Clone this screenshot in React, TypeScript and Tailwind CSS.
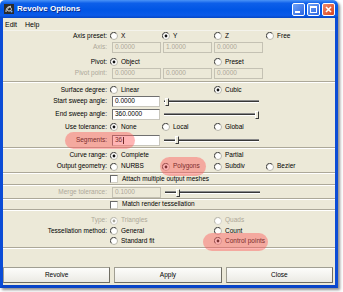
import React from 'react';

type Opt = { label: string; checked?: boolean } | null;

const Radio = ({ checked = false, disabled = false }: { checked?: boolean; disabled?: boolean }) => (
  <svg width="8" height="8" viewBox="0 0 8 8" className="shrink-0">
    <circle cx="4" cy="4" r="3.5" fill="#fff" stroke={disabled ? '#d2d0c6' : '#b8b6aa'} />
    <path d="M1.3 6.2 A3.4 3.4 0 0 1 6.2 1.3" fill="none" stroke={disabled ? '#bdbbb0' : '#4a4a4a'} />
    {checked && <circle cx="4" cy="4" r="1.4" fill={disabled ? '#a8a69a' : '#111'} />}
  </svg>
);

const Check = () => (
  <div className="w-[8px] h-[8px] shrink-0 bg-white border border-t-[#6a6a6a] border-l-[#6a6a6a] border-b-[#d0cec4] border-r-[#d0cec4]" />
);

const Row = ({ label = '', disabled = false, className = '', children }: { label?: string; disabled?: boolean; className?: string; children?: React.ReactNode }) => (
  <div className={`flex items-center ${className}`}>
    <div className={`w-[104px] mr-[3px] text-right whitespace-nowrap ${disabled ? 'text-[#aca899]' : 'text-black'}`}>{label}</div>
    {children}
  </div>
);

const Options = ({ items, disabled = false }: { items: Opt[]; disabled?: boolean }) => (
  <div className="flex">
    {items.map((o, i) => (
      <div key={i} className="w-[52px] flex items-center gap-[3px]">
        {o && (
          <>
            <Radio checked={o.checked} disabled={disabled} />
            <span className={`whitespace-nowrap ${disabled ? 'text-[#aca899]' : 'text-black'}`}>{o.label}</span>
          </>
        )}
      </div>
    ))}
  </div>
);

const Field = ({ value, disabled = false, w = 'w-[49px]', cursor = false }: { value: string; disabled?: boolean; w?: string; cursor?: boolean }) => (
  <div
    className={`${w} h-[11px] shrink-0 flex items-center pl-[2px] border ${
      disabled
        ? 'bg-[#ECE9D8] text-[#aca899] border-[#c4c1b3]'
        : 'bg-white text-black border-t-[#6f6f6f] border-l-[#6f6f6f] border-b-[#c8c6bc] border-r-[#c8c6bc]'
    }`}
  >
    {value}
    {cursor && <span className="ml-[1px] w-[1px] h-[7px] bg-black" />}
  </div>
);

const Slider = ({ pos }: { pos: number }) => (
  <div className="relative ml-[4px] w-[95px] h-[10px] flex items-center">
    <div className="w-full h-[3px] bg-[#383838] border-t border-[#8a8a8a] border-b border-b-white" />
    <div className="absolute top-[1px] w-[4px] h-[8px] bg-[#ECE9D8] border border-t-white border-l-white border-r-[#3a3a3a] border-b-[#3a3a3a]" style={{ left: pos }} />
  </div>
);

const Sep = ({ className = '' }: { className?: string }) => (
  <div className={`h-[2px] border-t border-[#aca899] border-b border-b-white ${className}`} />
);

const TitleButton = ({ kind }: { kind: 'min' | 'max' | 'close' }) => (
  <div
    className={`w-[13px] h-[13px] rounded-[2px] border border-white flex items-center justify-center ${
      kind === 'close'
        ? 'bg-[linear-gradient(135deg,#f08a6c,#d9431e)]'
        : 'bg-[linear-gradient(135deg,#6ea3f8,#2a63e0)]'
    }`}
  >
    {kind === 'min' && <div className="w-[5px] h-[2px] bg-white mt-[6px] mr-[3px]" />}
    {kind === 'max' && <div className="w-[7px] h-[7px] border border-white border-t-2" />}
    {kind === 'close' && (
      <svg width="7" height="7" viewBox="0 0 7 7">
        <path d="M1 1 L6 6 M6 1 L1 6" stroke="#fff" strokeWidth="1.6" />
      </svg>
    )}
  </div>
);

const Btn = ({ label }: { label: string }) => (
  <div className="h-[16px] flex items-center justify-center bg-[linear-gradient(to_bottom,#fdfdfb,#ebeae4)] border border-[#a09e92] border-r-[#6f6d63] border-b-[#6f6d63] text-black">
    {label}
  </div>
);

export default function App() {
  return (
    <div className="relative w-[343px] h-[292px] bg-white overflow-hidden font-['Liberation_Sans',Arial,sans-serif] text-[6.5px] leading-none">
      <div className="w-[338px] h-[288px] flex flex-col rounded-t-[5px] overflow-hidden shadow-[2px_2px_3px_rgba(0,0,0,0.45)]">
        <div className="h-[18px] shrink-0 flex items-center pl-[4px] pr-[3px] bg-[linear-gradient(to_bottom,#4a93f7_0%,#0d5fe9_18%,#0055e5_55%,#0a5ae9_85%,#0646c4_100%)]">
          <svg width="10" height="10" viewBox="0 0 10 10" className="shrink-0">
            <rect width="10" height="10" fill="#2b2b2b" />
            <path d="M2 8 C2 4 4 2 6 3 S8 7 5 7 S3 4 7 2" stroke="#e8e8e8" strokeWidth="1" fill="none" />
            <circle cx="7.5" cy="7.5" r="1" fill="#7fb2ff" />
          </svg>
          <span className="ml-[3px] text-white font-bold text-[8px] [text-shadow:1px_1px_0_#0a2a8a]">Revolve Options</span>
          <div className="ml-auto flex gap-[2px]">
            <TitleButton kind="min" />
            <TitleButton kind="max" />
            <TitleButton kind="close" />
          </div>
        </div>
        <div className="flex-1 flex flex-col bg-[#ECE9D8] border-x-[3px] border-b-[3px] border-[#0b4cd6] border-b-[#0a45c8]">
          <div className="h-[13px] shrink-0 flex items-center gap-[8px] pl-[2px] border-b border-[#f4f3ec] text-black text-[7px]">
            <span>Edit</span>
            <span>Help</span>
          </div>

          <Row label="Axis preset:" className="h-[10px]">
            <Options items={[{ label: 'X' }, { label: 'Y', checked: true }, { label: 'Z' }, { label: 'Free' }]} />
          </Row>
          <Row label="Axis:" disabled className="h-[12px]">
            <div className="flex gap-[2px] ml-[2px]">
              <Field value="0.0000" disabled />
              <Field value="1.0000" disabled />
              <Field value="0.0000" disabled />
            </div>
          </Row>
          <Row label="Pivot:" className="h-[12px] mt-[3px]">
            <Options items={[{ label: 'Object', checked: true }, null, { label: 'Preset' }]} />
          </Row>
          <Row label="Pivot point:" disabled className="h-[11px]">
            <div className="flex gap-[2px] ml-[2px]">
              <Field value="0.0000" disabled />
              <Field value="0.0000" disabled />
              <Field value="0.0000" disabled />
            </div>
          </Row>
          <Sep className="mt-[2px]" />
          <Row label="Surface degree:" className="h-[12px] mt-[1px]">
            <Options items={[{ label: 'Linear' }, null, { label: 'Cubic', checked: true }]} />
          </Row>
          <Row label="Start sweep angle:" className="h-[11px]">
            <div className="ml-[2px]"><Field value="0.0000" w="w-[48px]" /></div>
            <Slider pos={1} />
          </Row>
          <Row label="End sweep angle:" className="h-[11px] mt-[2px]">
            <div className="ml-[2px]"><Field value="360.0000" w="w-[48px]" /></div>
            <Slider pos={91} />
          </Row>
          <Row label="Use tolerance:" className="h-[12px] mt-[1px]">
            <Options items={[{ label: 'None', checked: true }, { label: 'Local' }, { label: 'Global' }]} />
          </Row>
          <Row label="Segments:" className="h-[12px] mt-[1px]">
            <div className="ml-[2px]"><Field value="36" w="w-[48px]" cursor /></div>
            <Slider pos={11} />
          </Row>
          <Sep className="mt-[1px]" />
          <Row label="Curve range:" className="h-[11px] mt-[1px]">
            <Options items={[{ label: 'Complete', checked: true }, null, { label: 'Partial' }]} />
          </Row>
          <Row label="Output geometry:" className="h-[11px]">
            <Options items={[{ label: 'NURBS' }, { label: 'Polygons', checked: true }, { label: 'Subdiv' }, { label: 'Bezier' }]} />
          </Row>
          <Sep />
          <Row className="h-[10px]">
            <div className="flex items-center gap-[4px]">
              <Check />
              <span className="whitespace-nowrap">Attach multiple output meshes</span>
            </div>
          </Row>
          <Sep />
          <Row label="Merge tolerance:" disabled className="h-[11px] mt-[1px]">
            <div className="ml-[2px]"><Field value="0.1000" disabled w="w-[49px]" /></div>
            <Slider pos={11} />
          </Row>
          <Sep />
          <Row className="h-[9px]">
            <div className="flex items-center gap-[4px]">
              <Check />
              <span className="whitespace-nowrap">Match render tessellation</span>
            </div>
          </Row>
          <Sep />
          <Row label="Type:" disabled className="h-[11px] mt-[4px]">
            <Options disabled items={[{ label: 'Triangles', checked: true }, null, { label: 'Quads' }]} />
          </Row>
          <Row label="Tessellation method:" className="h-[10px]">
            <Options items={[{ label: 'General' }, null, { label: 'Count' }]} />
          </Row>
          <Row className="h-[10px]">
            <Options items={[{ label: 'Standard fit' }, null, { label: 'Control points', checked: true }]} />
          </Row>
          <Sep className="mt-[1px]" />

          <div className="flex-1" />
          <div className="grid grid-cols-3 gap-[4px] pr-[2px] pb-[2px]">
            <Btn label="Revolve" />
            <Btn label="Apply" />
            <Btn label="Close" />
          </div>
        </div>
      </div>

      <div className="absolute left-[65px] top-[132px] w-[70px] h-[17px] rounded-full bg-[rgba(255,90,90,0.45)]" />
      <div className="absolute left-[160px] top-[157px] w-[46px] h-[19px] rounded-full bg-[rgba(255,90,90,0.45)]" />
      <div className="absolute left-[203px] top-[233px] w-[65px] h-[18px] rounded-full bg-[rgba(255,90,90,0.45)]" />
    </div>
  );
}
